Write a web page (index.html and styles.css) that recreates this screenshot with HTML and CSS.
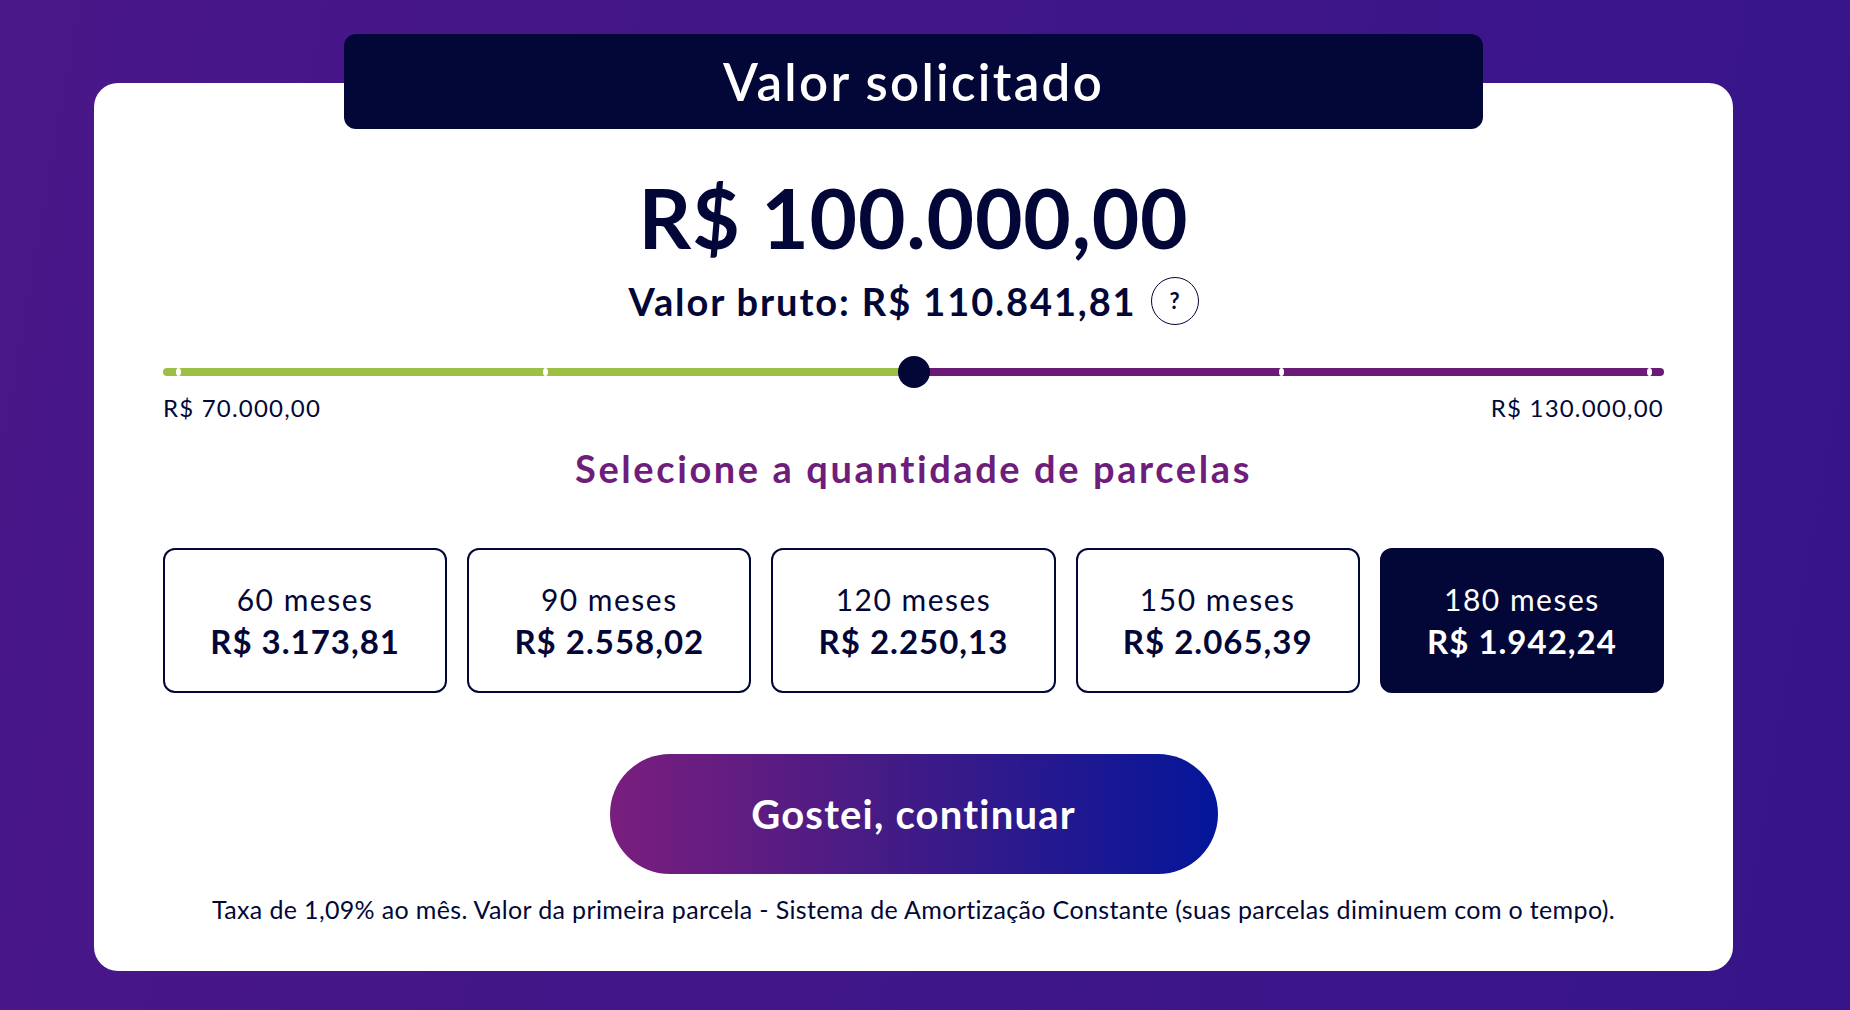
FILE: index.html
```html
<!DOCTYPE html>
<html lang="pt-BR">
<head>
    <meta charset="UTF-8">
    <meta name="viewport" content="width=device-width, initial-scale=1.0">
    <title>Valor solicitado</title>
<link rel="stylesheet" href="styles.css">
</head>
<body>
<main class="card">
    <h1 class="tab">Valor solicitado</h1>
    <div class="amount">R$ 100.000,00</div>
    <div class="gross">Valor bruto: R$ 110.841,81 <span class="help">?</span></div>

    <div class="slider">
        <div class="track">
            <span class="tick" style="left:15px"></span>
            <span class="tick" style="left:calc(15px + (100% - 30px) * .25)"></span>
            <span class="tick" style="left:calc(15px + (100% - 30px) * .75)"></span>
            <span class="tick" style="left:calc(100% - 15px)"></span>
            <span class="thumb" style="left:50%"></span>
        </div>
        <div class="limits">
            <span>R$ 70.000,00</span>
            <span>R$ 130.000,00</span>
        </div>
    </div>

    <h2 class="subtitle">Selecione a quantidade de parcelas</h2>

    <div class="plans">
        <button class="plan"><span>60 meses</span><b>R$ 3.173,81</b></button>
        <button class="plan"><span>90 meses</span><b>R$ 2.558,02</b></button>
        <button class="plan"><span>120 meses</span><b>R$ 2.250,13</b></button>
        <button class="plan"><span>150 meses</span><b>R$ 2.065,39</b></button>
        <button class="plan active"><span>180 meses</span><b>R$ 1.942,24</b></button>
    </div>

    <button class="cta">Gostei, continuar</button>

    <p class="note">Taxa de 1,09% ao mês. Valor da primeira parcela - Sistema de Amortização Constante (suas parcelas diminuem com o tempo).</p>
</main>
</body>
</html>
```

FILE: styles.css
```css
html,body{margin:0;height:100%;}
body{background:linear-gradient(100deg,#4a1788 0%,#3f1689 55%,#361589 100%);
font-family:Lato,"Open Sans",sans-serif;color:#020737;overflow:hidden;
padding-top:83px;box-sizing:border-box;}

.card{margin:0 0 0 94px;width:1639px;height:888px;box-sizing:border-box;background:#fff;
border-radius:24px;padding:0 69px;display:flex;flex-direction:column;align-items:center;}

.tab{margin:-49px 0 0;width:1139px;height:95px;box-sizing:border-box;background:#020737;color:#fff;
border-radius:12px;display:flex;align-items:center;justify-content:center;
font-size:51px;font-weight:600;letter-spacing:2.3px;}

.amount{margin-top:47px;font-size:82px;font-weight:700;line-height:1;letter-spacing:.8px;}

.gross{margin-top:18px;display:flex;align-items:center;gap:14px;font-size:38px;font-weight:700;line-height:50px;letter-spacing:1.9px;}
.help{width:46px;height:46px;border:1.5px solid #020737;border-radius:50%;display:flex;align-items:center;
justify-content:center;font-size:22px;font-weight:700;letter-spacing:0;}

.slider{width:100%;margin-top:42px;}
.track{position:relative;height:8px;border-radius:4px;
background:linear-gradient(to right,#9cbf46 50%,#6c1a78 50%);}
.tick{position:absolute;top:0;width:5px;height:8px;margin-left:-2.5px;border-radius:50%;background:#fff;}
.thumb{position:absolute;top:-12px;width:32px;height:32px;margin-left:-16px;border-radius:50%;background:#020737;}
.limits{display:flex;justify-content:space-between;margin-top:17px;font-size:24px;line-height:30px;letter-spacing:1.2px;}

.subtitle{margin:20px 0 0;font-size:38px;font-weight:700;color:#6f1d7b;line-height:50px;letter-spacing:2.6px;}

.plans{width:100%;margin-top:55px;display:grid;grid-template-columns:repeat(5,1fr);gap:20px;}
.plan{height:145px;border:2px solid #020737;border-radius:12px;background:#fff;color:#020737;
font-family:inherit;display:flex;flex-direction:column;align-items:center;justify-content:center;padding:0;}
.plan span{font-size:30px;line-height:41px;letter-spacing:1.5px;}
.plan b{font-size:33px;font-weight:700;line-height:42px;letter-spacing:1px;}
.plan.active{background:#020737;color:#fff;}

.cta{margin-top:61px;width:608px;height:120px;border:0;border-radius:60px;color:#fff;
background:linear-gradient(to right,#7a1e7e,#451b85 45%,#04169a);
font-family:inherit;font-size:40px;font-weight:700;letter-spacing:1.2px;}

.note{margin:20px 0 0;font-size:25px;line-height:30px;letter-spacing:.35px;}
```
